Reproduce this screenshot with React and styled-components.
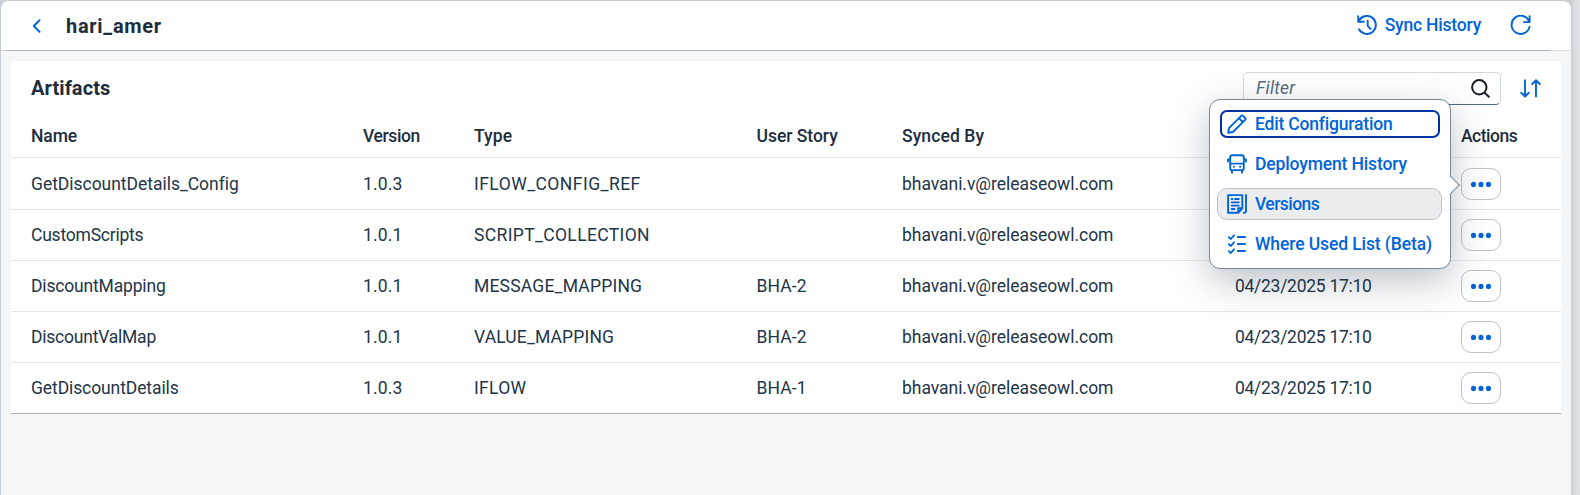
import React from 'react';
import styled, { createGlobalStyle, css } from 'styled-components';

const color = {
  text: '#223548',
  strong: '#1d2d3e',
  brand: '#0064d9',
  focus: '#0032a5',
  line: '#e4e5e6',
  edge: '#a8b3bd',
};

const GlobalStyle = createGlobalStyle`
  *, *::before, *::after { box-sizing: border-box; }
  body {
    margin: 0;
    overflow: hidden;
    background: #e1e5e8;
    color: ${color.text};
    font: 400 17.5px/22px Roboto, "Liberation Sans", sans-serif;
  }
  button { font: inherit; margin: 0; padding: 0; background: none; border: 0; }
`;

const Page = styled.div`
  height: 495px;
  padding-right: 9px;
  background: linear-gradient(90deg, #c9cfd5 1571px, #d9dee2 1575px, #e1e5e8 1580px);
`;

const Panel = styled.section`
  height: 495px;
  border: 1px solid #c6cdd4;
  border-bottom: 0;
  border-right: 0;
  border-radius: 9px 9px 0 0;
  background: #f5f6f7;
  overflow: hidden;
`;

const Header = styled.header`
  position: relative;
  display: flex;
  align-items: center;
  height: 50px;
  padding: 0 40px 0 31px;
  background: #fff;
  border-bottom: 1px solid #d9dde0;

  &::after {
    content: '';
    position: absolute;
    left: 5px;
    right: 20px;
    bottom: -1px;
    height: 1px;
    background: ${color.edge};
  }
`;

const Label = styled.span`
  white-space: nowrap;
  letter-spacing: ${(p) => p.$track || 0}px;
`;

const Title = styled.h1`
  flex: 1;
  margin: 1px 0 0 25px;
  font-size: 20px;
  font-weight: 700;
  letter-spacing: 0.7px;
  line-height: 24px;
  color: ${color.strong};
`;

const LinkButton = styled.button`
  display: flex;
  align-items: center;
  gap: 7px;
  margin-top: ${(p) => (p.$flush ? 0 : -1)}px;
  margin-right: ${(p) => p.$after || 0}px;
  color: ${color.brand};
  font-weight: 500;
`;

const Card = styled.div`
  margin: 10px 10px 0;
  background: #fff;
  border-bottom: 1px solid ${color.edge};
`;

const Toolbar = styled.div`
  display: flex;
  align-items: center;
  height: 54px;
  padding: 0 20px;
`;

const ToolbarTitle = styled.h2`
  flex: 1;
  margin: 0;
  font-size: 20px;
  font-weight: 700;
  line-height: 24px;
  letter-spacing: 0.08px;
  color: ${color.strong};
`;

const FilterBox = styled.div`
  display: flex;
  align-items: center;
  justify-content: space-between;
  width: 258px;
  height: 33px;
  margin-right: 19px;
  padding: 0 10px 0 12px;
  border: 1px solid #d1d7dd;
  border-bottom-color: #556b82;
  border-radius: 5px;
  color: #556b82;
  font-style: italic;
`;

const SearchButton = styled.button`
  margin-top: 1px;
  color: #131e29;
`;

const Row = styled.div`
  display: grid;
  grid-template-columns: 332px 111px 282.5px 145.5px 333px 226px 1fr;
  align-items: center;
  height: ${(p) => p.$height || 51}px;
  padding-left: 20px;

  & + & { border-top: 1px solid ${color.line}; }

  ${(p) => p.$head && css`
    font-weight: 500;
    color: ${color.strong};
    padding-bottom: 1px;
  `}
`;

const ActionCell = styled.div`
  position: relative;
  width: 40px;
  height: 32px;
  margin-top: ${(p) => (p.$shift ? 1 : 0)}px;
`;

const MoreButton = styled.button`
  display: flex;
  align-items: center;
  justify-content: center;
  width: 40px;
  height: 32px;
  border: 1px solid #bcc3ca;
  border-radius: 10px;
  background: #fff;
  color: ${color.brand};
`;

const Popover = styled.div`
  position: absolute;
  z-index: 2;
  top: -69px;
  right: calc(100% + 10px);
  width: 242px;
  height: 170px;
  padding: 8px 8px 8px 7px;
  display: flex;
  flex-direction: column;
  gap: 8px;
  background: #fff;
  border: 1px solid #788996;
  border-radius: 11px;
  box-shadow: 0 12px 37px rgba(34, 53, 72, 0.3);

  &::after {
    content: '';
    position: absolute;
    top: 78px;
    right: -7px;
    width: 14px;
    height: 14px;
    background: #fff;
    border: solid #788996;
    border-width: 1px 1px 0 0;
    transform: rotate(45deg);
  }
`;

const MenuButton = styled.button`
  position: relative;
  z-index: 1;
  display: flex;
  align-items: center;
  gap: 8px;
  height: 32px;
  flex: none;
  padding: 0 0 0 9px;
  border: 1px solid ${(p) => (p.$hover ? '#bcc3ca' : 'transparent')};
  border-radius: 10px;
  background: ${(p) => (p.$hover ? '#eaecee' : 'transparent')};
  color: ${color.brand};
  font-weight: 500;

  ${(p) => p.$focused && css`
    &::after {
      content: '';
      position: absolute;
      inset: 1px 1px 1px 2px;
      border: 2px solid ${color.focus};
      border-radius: 7px;
    }
  `}
`;

const Svg = styled.svg`
  display: block;
  flex: none;
  fill: none;
  stroke: currentColor;
  stroke-width: ${(p) => p.$weight || 1.9};
  stroke-linecap: round;
  stroke-linejoin: round;
`;

const Icon = ({ w = 20, h = 20, weight, children }) => (
  <Svg width={w} height={h} viewBox={`0 0 ${w} ${h}`} $weight={weight} aria-hidden="true">
    {children}
  </Svg>
);

const BackIcon = () => (
  <Icon w={9} h={14} weight={2}><path d="M7.5 1.3 1.8 7l5.7 5.7" /></Icon>
);
const HistoryIcon = () => (
  <Icon w={21} h={21}>
    <path d="M1.2 1.2v5.6h5.6M1.6 6.4A9 9 0 1 1 2 14.3M10.7 5.6v5.2l2.8 3.1" />
  </Icon>
);
const RefreshIcon = () => (
  <Icon w={21} h={21}>
    <path d="M19.6 1.2v5.9h-5.8M19.2 6.6A9.1 9.1 0 1 0 19.6 11.6" />
  </Icon>
);
const SearchIcon = () => (
  <Icon w={19} h={19} weight={2}>
    <circle cx="8.3" cy="8.3" r="7.2" /><path d="m13.6 13.6 4.2 4.2" />
  </Icon>
);
const SortIcon = () => (
  <Icon w={21} h={19}>
    <path d="M5 1.2v16.2M1.2 13.8 5 17.5l3.8-3.7M16 17.5V1.3M12.2 5 16 1.3 19.8 5" />
  </Icon>
);
const PencilIcon = () => (
  <Icon>
    <path d="M1.2 18.8 2 14.1 14.2 1.9Q15.1 1 16 1.9l2.1 2.1q.9.9 0 1.8L5.9 18Z M12 4.2l3.8 3.8" />
  </Icon>
);
const BusIcon = () => (
  <Icon>
    <path d="M3.2 10V3.3Q3.2 1.2 5.3 1.2h9.4q2.1 0 2.1 2.1V10M3.2 9.6h13.6v4.6q0 1.9-1.9 1.9H5.1q-1.9 0-1.9-1.9ZM3 5.2H1.6Q1 5.2 1 5.8v1.7M17 5.2h1.4q.6 0 .6.6v1.7M5 16.4v2.4M15 16.4v2.4" />
    <path d="M6.8 12.8h.2M13 12.8h.2" strokeWidth="2" />
  </Icon>
);
const DocumentIcon = () => (
  <Icon>
    <path d="M1.1 1.1h14.2v13.2l-4.1 4.5H1.1ZM15.3 14.2h-4.1v4.4M19 1v16q0 1.8-2.3 1.8" />
    <path d="M4.7 5h.8M8 5h3.8M4.7 8.3h7.1M4.7 11.6h7.1M4.7 15h2.7" strokeWidth="1.8" />
  </Icon>
);
const ChecklistIcon = () => (
  <Icon weight={1.8}>
    <path d="M1.9 3.2 3.8 5 7 1.3M1.9 10.2 3.8 12 7 8.3M1.9 17.2 3.8 19 7 15.3M10.7 3h7.4M10.7 10h7.4M10.7 17h7.4" />
  </Icon>
);
const DotsIcon = () => (
  <Icon w={22} h={6}>
    <g fill="currentColor" stroke="none">
      <circle cx="3.5" cy="3.4" r="2.55" /><circle cx="11" cy="3.4" r="2.55" /><circle cx="18.5" cy="3.4" r="2.55" />
    </g>
  </Icon>
);

const columns = [
  ['Name', -0.1], ['Version', -0.4], ['Type', 0.1], ['User Story', -0.02],
  ['Synced By', 0.1], ['', 0], ['Actions', -0.5],
];

const artifacts = [
  { name: ['GetDiscountDetails_Config', -0.03], version: '1.0.3', type: ['IFLOW_CONFIG_REF', 0.46] },
  { name: ['CustomScripts', -0.22], version: '1.0.1', type: ['SCRIPT_COLLECTION', 0.36] },
  { name: ['DiscountMapping', -0.17], version: '1.0.1', type: ['MESSAGE_MAPPING', 0.2], story: 'BHA-2', date: '04/23/2025 17:10' },
  { name: ['DiscountValMap', -0.22], version: '1.0.1', type: ['VALUE_MAPPING', 0.15], story: 'BHA-2', date: '04/23/2025 17:10' },
  { name: ['GetDiscountDetails', -0.1], version: '1.0.3', type: ['IFLOW', 0.3], story: 'BHA-1', date: '04/23/2025 17:10' },
];

const actions = [
  { text: 'Edit Configuration', track: -0.19, icon: <PencilIcon />, focused: true },
  { text: 'Deployment History', track: -0.14, icon: <BusIcon /> },
  { text: 'Versions', track: -0.55, icon: <DocumentIcon />, hover: true },
  { text: 'Where Used List (Beta)', track: -0.1, icon: <ChecklistIcon /> },
];

const ActionMenu = () => (
  <Popover role="menu">
    {actions.map((a) => (
      <MenuButton key={a.text} $focused={a.focused} $hover={a.hover}>
        {a.icon}
        <Label $track={a.track}>{a.text}</Label>
      </MenuButton>
    ))}
  </Popover>
);

export default function App() {
  return (
    <Page>
      <GlobalStyle />
      <Panel>
        <Header>
          <LinkButton aria-label="Back" $flush><BackIcon /></LinkButton>
          <Title>hari_amer</Title>
          <LinkButton $after={29}>
            <HistoryIcon />
            <Label $track={-0.2}>Sync History</Label>
          </LinkButton>
          <LinkButton aria-label="Refresh"><RefreshIcon /></LinkButton>
        </Header>
        <Card>
          <Toolbar>
            <ToolbarTitle>Artifacts</ToolbarTitle>
            <FilterBox>
              <Label $track={0.2}>Filter</Label>
              <SearchButton aria-label="Search"><SearchIcon /></SearchButton>
            </FilterBox>
            <LinkButton aria-label="Sort" $flush><SortIcon /></LinkButton>
          </Toolbar>
          <Row $head $height={42}>
            {columns.map(([text, track], i) => <Label key={i} $track={track}>{text}</Label>)}
          </Row>
          {artifacts.map((a, i) => (
            <Row key={a.name[0]} $height={i === 0 ? 52 : 51}>
              <Label $track={a.name[1]}>{a.name[0]}</Label>
              <Label $track={0.18}>{a.version}</Label>
              <Label $track={a.type[1]}>{a.type[0]}</Label>
              <Label $track={0.1}>{a.story}</Label>
              <Label $track={-0.04}>bhavani.v@releaseowl.com</Label>
              <Label $track={-0.28}>{a.date}</Label>
              <ActionCell $shift={i === 0}>
                <MoreButton aria-label="More actions"><DotsIcon /></MoreButton>
                {i === 0 && <ActionMenu />}
              </ActionCell>
            </Row>
          ))}
        </Card>
      </Panel>
    </Page>
  );
}
